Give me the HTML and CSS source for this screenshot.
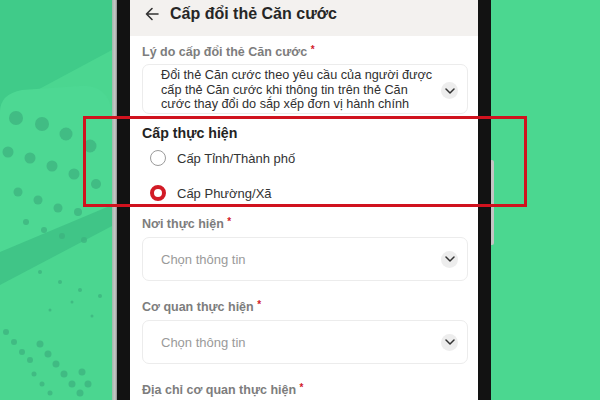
FILE: index.html
```html
<!DOCTYPE html>
<html lang="vi">
<head>
<meta charset="utf-8">
<title>Cấp đổi thẻ Căn cước</title>
<link rel="stylesheet" href="styles.css">
</head>
<body>
<div class="stage">
  <svg class="deco" width="112" height="400" viewBox="0 0 112 400">
    <rect x="0" y="0" width="112" height="400" fill="#4bd690"/>
    <path d="M0 0 H112 V50 L0 110 Z" fill="#40cb89"/>
    <path d="M0 112 Q0 94 22 90 L80 86 Q108 84 112 112 V212 L0 262 Z" fill="#4dd893"/>
    <path d="M0 252 L112 205 V226 L0 285 Z" fill="#40c587"/>
    <g fill="#3db37f" opacity="0.75">
      <circle cx="16" cy="118" r="7"/><circle cx="42" cy="124" r="7"/><circle cx="66" cy="134" r="6.5"/><circle cx="90" cy="146" r="6.5"/>
      <circle cx="8" cy="152" r="5.5"/><circle cx="30" cy="158" r="5.5"/><circle cx="52" cy="166" r="5.5"/><circle cx="74" cy="174" r="5.5"/><circle cx="96" cy="184" r="5"/>
      <circle cx="18" cy="192" r="4.5"/><circle cx="38" cy="200" r="4.5"/><circle cx="58" cy="208" r="4.5"/><circle cx="78" cy="212" r="4"/>
      <circle cx="26" cy="222" r="3"/><circle cx="44" cy="230" r="3"/><circle cx="62" cy="236" r="3"/><circle cx="84" cy="240" r="3"/>
      <circle cx="40" cy="272" r="2"/><circle cx="60" cy="282" r="2"/><circle cx="80" cy="290" r="2"/><circle cx="100" cy="296" r="2"/>
      <circle cx="72" cy="302" r="1.5"/><circle cx="92" cy="316" r="1.5"/><circle cx="50" cy="310" r="1.5"/>
      <circle cx="6" cy="332" r="3"/><circle cx="14" cy="342" r="3"/><circle cx="22" cy="352" r="3"/><circle cx="30" cy="360" r="3"/>
      <circle cx="40" cy="344" r="3.5"/><circle cx="48" cy="354" r="3.5"/><circle cx="56" cy="364" r="3.5"/><circle cx="64" cy="374" r="3.5"/>
      <circle cx="72" cy="384" r="3.5"/><circle cx="80" cy="393" r="3.5"/><circle cx="82" cy="372" r="3.5"/><circle cx="88" cy="384" r="3.5"/>
      <circle cx="34" cy="374" r="2.5"/><circle cx="42" cy="384" r="2.5"/><circle cx="50" cy="393" r="2.5"/>
    </g>
  </svg>
  <div class="phone">
    <div class="edge-left"></div>
    <div class="bezel">
      <div class="screen">
        <header class="topbar">
          <svg class="back" width="14" height="14" viewBox="0 0 14 14"><path d="M13 7H1.5M7 1.5L1.5 7L7 12.5" fill="none" stroke="#333" stroke-width="1.6" stroke-linecap="round" stroke-linejoin="round"/></svg>
          <h1 class="title">Cấp đổi thẻ Căn cước</h1>
        </header>
        <main class="form">
          <div class="label">Lý do cấp đổi thẻ Căn cước <span class="req">*</span></div>
          <div class="select multi">
            <div class="value">
              <span class="line">Đổi thẻ Căn cước theo yêu cầu của người được</span>
              <span class="line">cấp thẻ Căn cước khi thông tin trên thẻ Căn</span>
              <span class="line">cước thay đổi do sắp xếp đơn vị hành chính</span>
            </div>
            <span class="chev"><svg width="10" height="6" viewBox="0 0 10 6"><path d="M1 1l4 4 4-4" fill="none" stroke="#333" stroke-width="1.5" stroke-linecap="round" stroke-linejoin="round"/></svg></span>
          </div>
          <div class="section">Cấp thực hiện</div>
          <div class="radios">
            <div class="radio"><span class="dot"></span>Cấp Tỉnh/Thành phố</div>
            <div class="radio on"><span class="dot"></span>Cấp Phường/Xã</div>
          </div>
          <div class="label">Nơi thực hiện <span class="req">*</span></div>
          <div class="select">
            <div class="placeholder">Chọn thông tin</div>
            <span class="chev"><svg width="10" height="6" viewBox="0 0 10 6"><path d="M1 1l4 4 4-4" fill="none" stroke="#333" stroke-width="1.5" stroke-linecap="round" stroke-linejoin="round"/></svg></span>
          </div>
          <div class="label">Cơ quan thực hiện <span class="req">*</span></div>
          <div class="select">
            <div class="placeholder">Chọn thông tin</div>
            <span class="chev"><svg width="10" height="6" viewBox="0 0 10 6"><path d="M1 1l4 4 4-4" fill="none" stroke="#333" stroke-width="1.5" stroke-linecap="round" stroke-linejoin="round"/></svg></span>
          </div>
          <div class="label">Địa chỉ cơ quan thực hiện <span class="req">*</span></div>
        </main>
      </div>
    </div>
    <div class="edge-right"></div>
  </div>
  <div class="highlight"></div>
</div>
</body>
</html>
```
FILE: styles.css
```css
* { box-sizing: border-box; margin: 0; padding: 0; }
html, body { width: 600px; height: 400px; overflow: hidden; }
body { background: #4bd790; font-family: "Liberation Sans", Arial, sans-serif; }
.stage { position: relative; width: 600px; height: 400px; display: flex; }
.deco { position: absolute; left: 0; top: 0; }
.phone { display: flex; height: 400px; margin-left: 112px; position: relative; }
.edge-left { width: 5px; background: linear-gradient(90deg, #9fb8ab, #c8c8c8 60%, #8d8d8d); }
.bezel { background: #121212; padding: 0 13px 0 13px; width: 374px; }
.screen { width: 348px; height: 400px; background: #fff; overflow: hidden; }
.edge-right { width: 3px; margin-top: 160px; height: 85px; background: #c4c4c4; border-radius: 0 2px 2px 0; }

.topbar { height: 36px; background: #f3f1ef; display: flex; align-items: center; padding-left: 15px; padding-bottom: 8px; }
.back { margin-right: 11px; }
.title { font-size: 16px; font-weight: 700; color: #262626; }

.form { padding: 0 10px 0 12px; }
.label { font-size: 12.5px; font-weight: 700; color: #7d7d7d; margin-top: 6px; line-height: 16px; }
.req { color: #d21b2a; font-size: 10px; vertical-align: 3px; }
.select { margin-top: 5px; border: 1px solid #ececec; border-radius: 7px; display: flex; align-items: center; height: 44px; padding: 0 9px 0 18px; }
.select + .label { margin-top: 16px; }
.select.multi { margin-top: 4px; height: 50px; align-items: flex-start; padding-top: 3px; overflow: hidden; }
.value { flex: 1; font-size: 12.7px; line-height: 14.5px; color: #303030; }
.line { display: block; white-space: nowrap; }
.placeholder { flex: 1; font-size: 13px; color: #9a9a9a; }
.chev { width: 17px; height: 17px; border-radius: 50%; background: #ededed; display: flex; align-items: center; justify-content: center; flex: none; }
.multi .chev { margin-top: 14px; }

.section { margin-top: 10px; font-size: 14.2px; font-weight: 700; color: #232323; line-height: 18px; }
.radios { display: flex; flex-direction: column; gap: 19px; margin-top: 8px; padding-left: 8px; }
.radio { display: flex; align-items: center; font-size: 13px; color: #333; height: 16px; }
.dot { width: 16px; height: 16px; border-radius: 50%; border: 1.3px solid #9b9b9b; margin-right: 11px; flex: none; }
.radio.on .dot { border: 4.5px solid #d21b26; background: #fff; }
.radios + .label { margin-top: 13px; }

.highlight { position: absolute; left: 83px; top: 116px; width: 444px; height: 91px; border: 3px solid #d0121e; }
```
